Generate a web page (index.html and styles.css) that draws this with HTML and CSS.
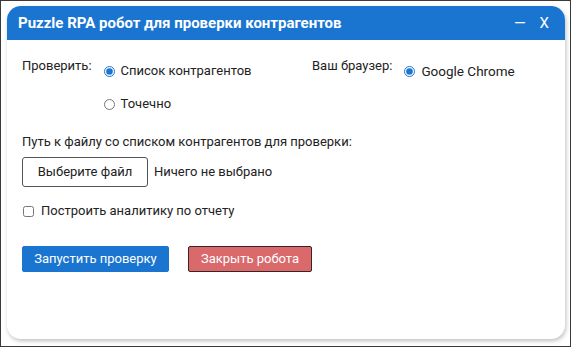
FILE: index.html
```html
<!DOCTYPE html>
<html lang="ru">
<head>
  <meta charset="UTF-8">
  <title>Puzzle RPA</title>
  <link rel="stylesheet" href="styles.css">
</head>
<body>

<div class="frame">
  <div class="window">
    <header class="titlebar">
      <h1>Puzzle RPA робот для проверки контрагентов</h1>
      <div class="controls">
        <span class="minimize">—</span>
        <span class="close">X</span>
      </div>
    </header>

    <div class="content">
      <div class="options">
        <div class="group check-group">
          <span class="label">Проверить:</span>
          <div class="radios">
            <label class="radio"><input type="radio" name="mode" checked> Список контрагентов</label>
            <label class="radio"><input type="radio" name="mode"> Точечно</label>
          </div>
        </div>
        <div class="group">
          <span class="label">Ваш браузер:</span>
          <div class="radios">
            <label class="radio chrome"><input type="radio" name="browser" checked> Google Chrome</label>
          </div>
        </div>
      </div>

      <p class="path-label">Путь к файлу со списком контрагентов для проверки:</p>
      <div class="file-row">
        <button class="file-btn">Выберите файл</button>
        <span class="file-name">Ничего не выбрано</span>
      </div>

      <label class="check"><input type="checkbox"> Построить аналитику по отчету</label>

      <div class="actions">
        <button class="btn btn-start">Запустить проверку</button>
        <button class="btn btn-close">Закрыть робота</button>
      </div>
    </div>
  </div>
</div>

</body>
</html>
```

FILE: styles.css
```css
body {
  margin: 0;
  font-family: Roboto, "Noto Sans", sans-serif;
  font-size: 13px;
  line-height: 18px;
  color: #222;
  background: #fff;
}
.frame {
  width: 571px;
  height: 347px;
  box-sizing: border-box;
  border: 1px solid #3a3a3a;
  padding: 5px 0 0 6px;
}
.window {
  width: 558px;
  height: 333px;
  background: #fff;
  border-radius: 14px;
  overflow: hidden;
  box-shadow: 1px 2px 4px rgba(0, 0, 0, 0.25);
}
.titlebar {
  height: 34px;
  background: #1a75d1;
  color: #fff;
  display: flex;
  align-items: center;
  justify-content: space-between;
  padding: 0 16px 0 11px;
}
.titlebar h1 {
  margin: 0;
  font-size: 15px;
  font-weight: bold;
}
.controls {
  display: flex;
  gap: 14px;
  font-size: 15px;
}
.content {
  padding: 15px 15px 0 15px;
}
.options {
  display: flex;
}
.group {
  display: flex;
  gap: 12px;
}
.check-group {
  width: 290px;
}
.label {
  padding-top: 2px;
}
.radios {
  display: flex;
  flex-direction: column;
  gap: 15px;
  padding-top: 7px;
}
.radio {
  display: flex;
  align-items: center;
  gap: 6px;
}
.chrome {
  font-size: 13.5px;
}
input[type="radio"] {
  width: 11px;
  height: 11px;
  margin: 0;
  accent-color: #1a75d1;
}
.path-label {
  margin: 20px 0 6px;
}
.file-row {
  display: flex;
  align-items: center;
  gap: 6px;
}
.file-btn {
  width: 126px;
  height: 30px;
  background: #fff;
  border: 1px solid #555;
  border-radius: 3px;
  font: inherit;
  color: #222;
}
.check {
  display: flex;
  align-items: center;
  gap: 7px;
  margin-top: 15px;
}
input[type="checkbox"] {
  width: 11px;
  height: 11px;
  margin: 0 0 0 1px;
}
.actions {
  display: flex;
  gap: 19px;
  margin-top: 26px;
}
.btn {
  height: 26px;
  border-radius: 2px;
  font: inherit;
  color: #fff;
}
.btn-start {
  width: 147px;
  background: #1a75d1;
  border: 1px solid #1a75d1;
}
.btn-close {
  width: 124px;
  background: #d9696b;
  border: 1px solid #3b2424;
}
```
